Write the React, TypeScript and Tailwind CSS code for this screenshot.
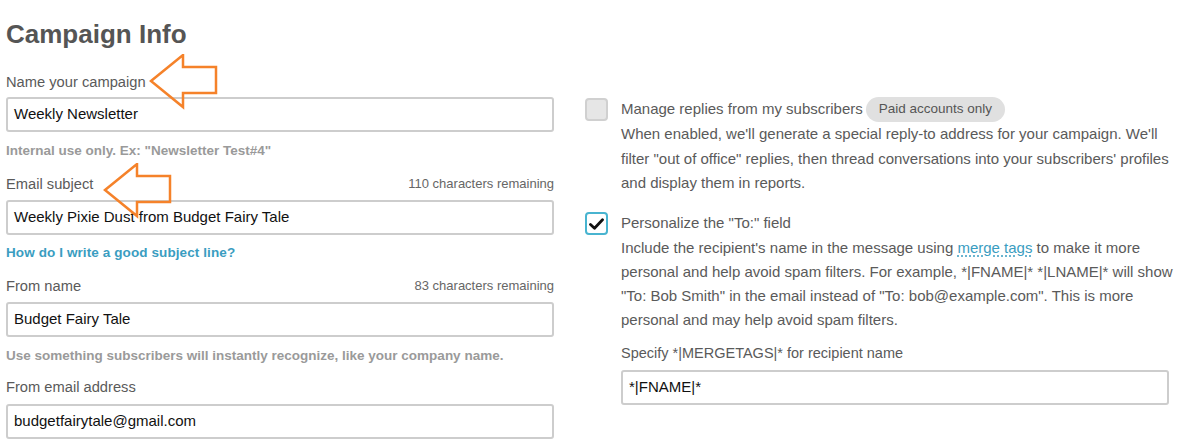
import React from 'react';

const font = { fontFamily: '"Liberation Sans", Arial, sans-serif' };

function Field({ value }: { value: string }) {
  return (
    <div className="h-[35px] w-full rounded-[3px] border-2 border-[#cdcdcd] bg-white px-[6px] flex items-center text-[15px] text-[#111]">
      {value}
    </div>
  );
}

function Label({ text, counter, className = '' }: { text: string; counter?: string; className?: string }) {
  return (
    <div className={`flex items-center justify-between h-[20px] ${className}`}>
      <span className="text-[14.7px] text-[#5a5a5a]">{text}</span>
      {counter && <span className="text-[13px] text-[#666]">{counter}</span>}
    </div>
  );
}

function Arrow({ className }: { className: string }) {
  return (
    <svg className={`absolute ${className}`} width="70" height="56" viewBox="0 0 70 56" fill="none">
      <polygon
        points="2,27 34,1 34,13 67,13 67,39 34,39 34,53"
        stroke="#f5822a"
        strokeWidth="2.5"
        strokeLinejoin="miter"
        fill="none"
      />
    </svg>
  );
}

export default function App() {
  return (
    <div className="relative w-[1197px] h-[447px] overflow-hidden bg-white" style={font}>
      <div className="pl-[6px] pt-[19px]">
        <h1 className="text-[26px] leading-[30px] font-bold text-[#555]">Campaign Info</h1>

        <div className="flex mt-[23px]">
          {/* left column */}
          <div className="w-[548px] shrink-0">
            <Label text="Name your campaign" className="mb-[5px]" />
            <Field value="Weekly Newsletter" />
            <p className="mt-[10px] h-[18px] leading-[18px] text-[13.5px] font-bold text-[#9a9a9a]">
              Internal use only. Ex: "Newsletter Test#4"
            </p>

            <Label text="Email subject" counter="110 characters remaining" className="mt-[14px] mb-[6px]" />
            <Field value="Weekly Pixie Dust from Budget Fairy Tale" />
            <p className="mt-[9px] h-[18px] leading-[18px] text-[13.5px] tracking-[0.1px] font-bold text-[#3a9dc1]">
              How do I write a good subject line?
            </p>

            <Label text="From name" counter="83 characters remaining" className="mt-[14px] mb-[6px]" />
            <Field value="Budget Fairy Tale" />
            <p className="mt-[10px] h-[18px] leading-[18px] text-[13.5px] font-bold text-[#9a9a9a]">
              Use something subscribers will instantly recognize, like your company name.
            </p>

            <Label text="From email address" className="mt-[12px] mb-[7px]" />
            <Field value="budgetfairytale@gmail.com" />
          </div>

          {/* right column */}
          <div className="ml-[31px] w-[584px] pt-[25px]">
            <div className="flex gap-[13px]">
              <div className="mt-[1px] w-[23px] h-[23px] shrink-0 rounded-[4px] border-2 border-[#d0d0d0] bg-[#e6e6e6]" />
              <div className="text-[15px] leading-[24.6px] text-[#5a5a5a]">
                <div className="flex items-center">
                  <span>Manage replies from my subscribers</span>
                  <span className="ml-[3px] h-[25px] px-[13px] rounded-full bg-[#e0e0e0] text-[13.5px] text-[#555] flex items-center">
                    Paid accounts only
                  </span>
                </div>
                <p>
                  When enabled, we'll generate a special reply-to address for your campaign. We'll filter "out of office"
                  replies, then thread conversations into your subscribers' profiles and display them in reports.
                </p>
              </div>
            </div>

            <div className="flex gap-[13px] mt-[15.5px]">
              <div className="mt-[1px] w-[23px] h-[23px] shrink-0 rounded-[4px] border-2 border-[#48b4d0] bg-white flex items-center justify-center">
                <svg width="15" height="12" viewBox="0 0 15 12">
                  <path d="M1.5 6.5 L5.5 10.2 L13.5 1.8" stroke="#111" strokeWidth="2.8" fill="none" strokeLinecap="round" strokeLinejoin="round" />
                </svg>
              </div>
              <div className="text-[15px] leading-[24.3px] text-[#5a5a5a]">
                <div>Personalize the "To:" field</div>
                <p className="w-[552px]">
                  Include the recipient's name in the message using{' '}
                  <span className="text-[#3a9dc1] underline decoration-dotted decoration-[#3a9dc1] underline-offset-[3px]">merge tags</span> to make it
                  more personal and help avoid spam filters. For example, *|FNAME|* *|LNAME|* will show "To: Bob Smith"
                  in the email instead of "To: bob@example.com". This is more personal and may help avoid spam filters.
                </p>
                <div className="mt-[10px] h-[20px] leading-[20px] text-[14.5px]">Specify *|MERGETAGS|* for recipient name</div>
                <div className="mt-[7px] w-[548px]">
                  <Field value="*|FNAME|*" />
                </div>
              </div>
            </div>
          </div>
        </div>
      </div>

      <Arrow className="left-[149px] top-[54px]" />
      <Arrow className="left-[103px] top-[163px]" />
    </div>
  );
}
